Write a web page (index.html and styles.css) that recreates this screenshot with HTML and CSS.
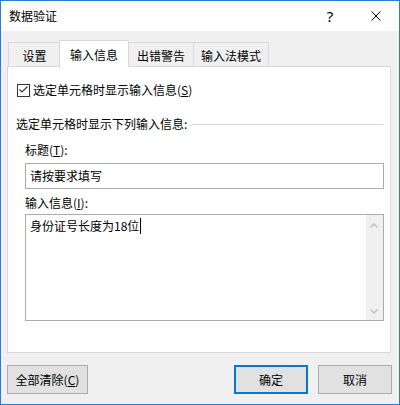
FILE: index.html
```html
<!DOCTYPE html>
<html lang="zh-CN">

<head>
    <meta charset="UTF-8">
    <title>数据验证</title>
    <link rel="stylesheet" href="styles.css">
</head>

<body>

    <div class="dialog">

        <!-- 标题栏 -->
        <div class="titlebar">
            <span class="title">数据验证</span>
            <span class="tb-btn help">?</span>
            <span class="tb-btn close">
                <svg width="10" height="10" viewBox="0 0 10 10">
                    <path d="M0.5 0.5 L9.5 9.5 M9.5 0.5 L0.5 9.5" stroke="#000" stroke-width="1" fill="none" />
                </svg>
            </span>
        </div>

        <div class="body">
            <!-- 选项卡 -->
            <ul class="tabs">
                <li class="tab t1">设置</li>
                <li class="tab t2 current">输入信息</li>
                <li class="tab t3">出错警告</li>
                <li class="tab t4">输入法模式</li>
            </ul>

            <div class="panel">
                <div class="check-row">
                    <svg class="checkbox" width="13" height="13" viewBox="0 0 13 13">
                        <rect x="0.5" y="0.5" width="12" height="12" fill="#fff" stroke="#333" />
                        <polyline points="2.5,5.5 5,8 10.5,2.5" fill="none" stroke="#333" stroke-width="1.1" />
                    </svg>
                    <span>选定单元格时显示输入信息(<u>S</u>)</span>
                </div>

                <div class="group-title"><span>选定单元格时显示下列输入信息:</span></div>

                <div class="field-label">标题(<u>T</u>):</div>
                <div class="textbox">请按要求填写</div>

                <div class="field-label lbl2">输入信息(<u>I</u>):</div>
                <div class="memo">
                    <div class="memo-text">身份证号长度为18位<span class="caret"></span></div>
                    <div class="scrollbar">
                        <svg width="8" height="5" viewBox="0 0 8 5">
                            <polyline points="0.5,4.5 4,1 7.5,4.5" fill="none" stroke="#c2c2c2" stroke-width="1.5" />
                        </svg>
                        <svg width="8" height="5" viewBox="0 0 8 5">
                            <polyline points="0.5,0.5 4,4 7.5,0.5" fill="none" stroke="#c2c2c2" stroke-width="1.5" />
                        </svg>
                    </div>
                </div>
            </div>

            <!-- 底部按钮 -->
            <div class="buttons">
                <button class="btn clear">全部清除(<u>C</u>)</button>
                <span class="spacer"></span>
                <button class="btn ok">确定</button>
                <button class="btn cancel">取消</button>
            </div>
        </div>
    </div>

</body>

</html>
```

FILE: styles.css
```css
* {
    padding: 0;
    margin: 0;
    list-style: none;
    box-sizing: border-box;
}

body {
    font-family: "Noto Sans CJK SC", "Noto Sans", sans-serif;
    font-size: 12px;
    color: #000;
    background: #fff;
}

.dialog {
    width: 400px;
    height: 405px;
    border: 1px solid #2b7cd3;
    background: #f0f0f0;
    display: flex;
    flex-direction: column;
}

/* 标题栏 */
.titlebar {
    height: 30px;
    background: #fff;
    display: flex;
    align-items: center;
}

.title {
    flex: 1;
    padding-left: 8px;
    line-height: 16px;
}

.tb-btn {
    width: 46px;
    height: 30px;
    display: flex;
    align-items: center;
    justify-content: center;
}

.help {
    font-family: "Noto Sans", sans-serif;
    font-size: 15px;
    padding-bottom: 1px;
}

.body {
    flex: 1;
    padding: 9px 8px 10px 6px;
    display: flex;
    flex-direction: column;
}

/* 选项卡 */
.tabs {
    height: 26px;
    display: flex;
    align-items: flex-end;
    margin-left: 1px;
}

.tab {
    height: 24px;
    border: 1px solid #d9d9d9;
    border-bottom: 0;
    background: #f0f0f0;
    text-align: center;
    padding-top: 5px;
    line-height: 16px;
}

.t1 {
    width: 53px;
}

.t2 {
    width: 70px;
    margin-left: -2px;
}

.t3 {
    width: 66px;
    margin-left: -1px;
}

.t4 {
    width: 76px;
    margin-left: -1px;
}

.tab.current {
    height: 27px;
    background: #fff;
    padding-top: 6px;
    margin-bottom: -1px;
    position: relative;
    z-index: 1;
}

.panel {
    height: 287px;
    background: #fff;
    border: 1px solid #d9d9d9;
    padding: 15px 6px 0 8px;
}

.check-row {
    display: flex;
    align-items: center;
    height: 16px;
    line-height: 16px;
    padding-left: 1px;
}

.checkbox {
    margin-right: 3px;
}

u {
    text-decoration: underline;
    text-underline-offset: 1px;
}

.group-title {
    display: flex;
    align-items: center;
    margin-top: 18px;
    line-height: 16px;
}

.group-title::after {
    content: "";
    flex: 1;
    height: 1px;
    background: #dcdcdc;
    margin-left: 5px;
}

.field-label {
    margin: 10px 0 0 9px;
    line-height: 16px;
}

.field-label.lbl2 {
    margin-top: 6px;
}

.textbox {
    margin: 5px 0 0 9px;
    height: 26px;
    border: 1px solid #acacac;
    padding-left: 4px;
    line-height: 24px;
}

.memo {
    margin: 3px 0 0 9px;
    height: 107px;
    border: 1px solid #acacac;
    display: flex;
}

.memo-text {
    flex: 1;
    padding: 3px 4px;
    line-height: 16px;
}

.caret {
    display: inline-block;
    width: 1px;
    height: 16px;
    background: #000;
    vertical-align: top;
    margin-left: 1px;
}

.scrollbar {
    width: 17px;
    background: #f0f0f0;
    display: flex;
    flex-direction: column;
    justify-content: space-between;
    align-items: center;
    padding: 8px 1px 6px 0;
}

/* 底部按钮 */
.buttons {
    display: flex;
    margin-top: 12px;
    margin-right: -1px;
}

.spacer {
    flex: 1;
}

.btn {
    height: 29px;
    width: 74px;
    background: #e1e1e1;
    border: 1px solid #adadad;
    font-family: inherit;
    font-size: 12px;
    color: #000;
    line-height: 16px;
}

.btn.clear {
    width: 81px;
}

.btn.ok {
    border: 2px solid #0078d7;
}

.btn.cancel {
    margin-left: 10px;
}
```
